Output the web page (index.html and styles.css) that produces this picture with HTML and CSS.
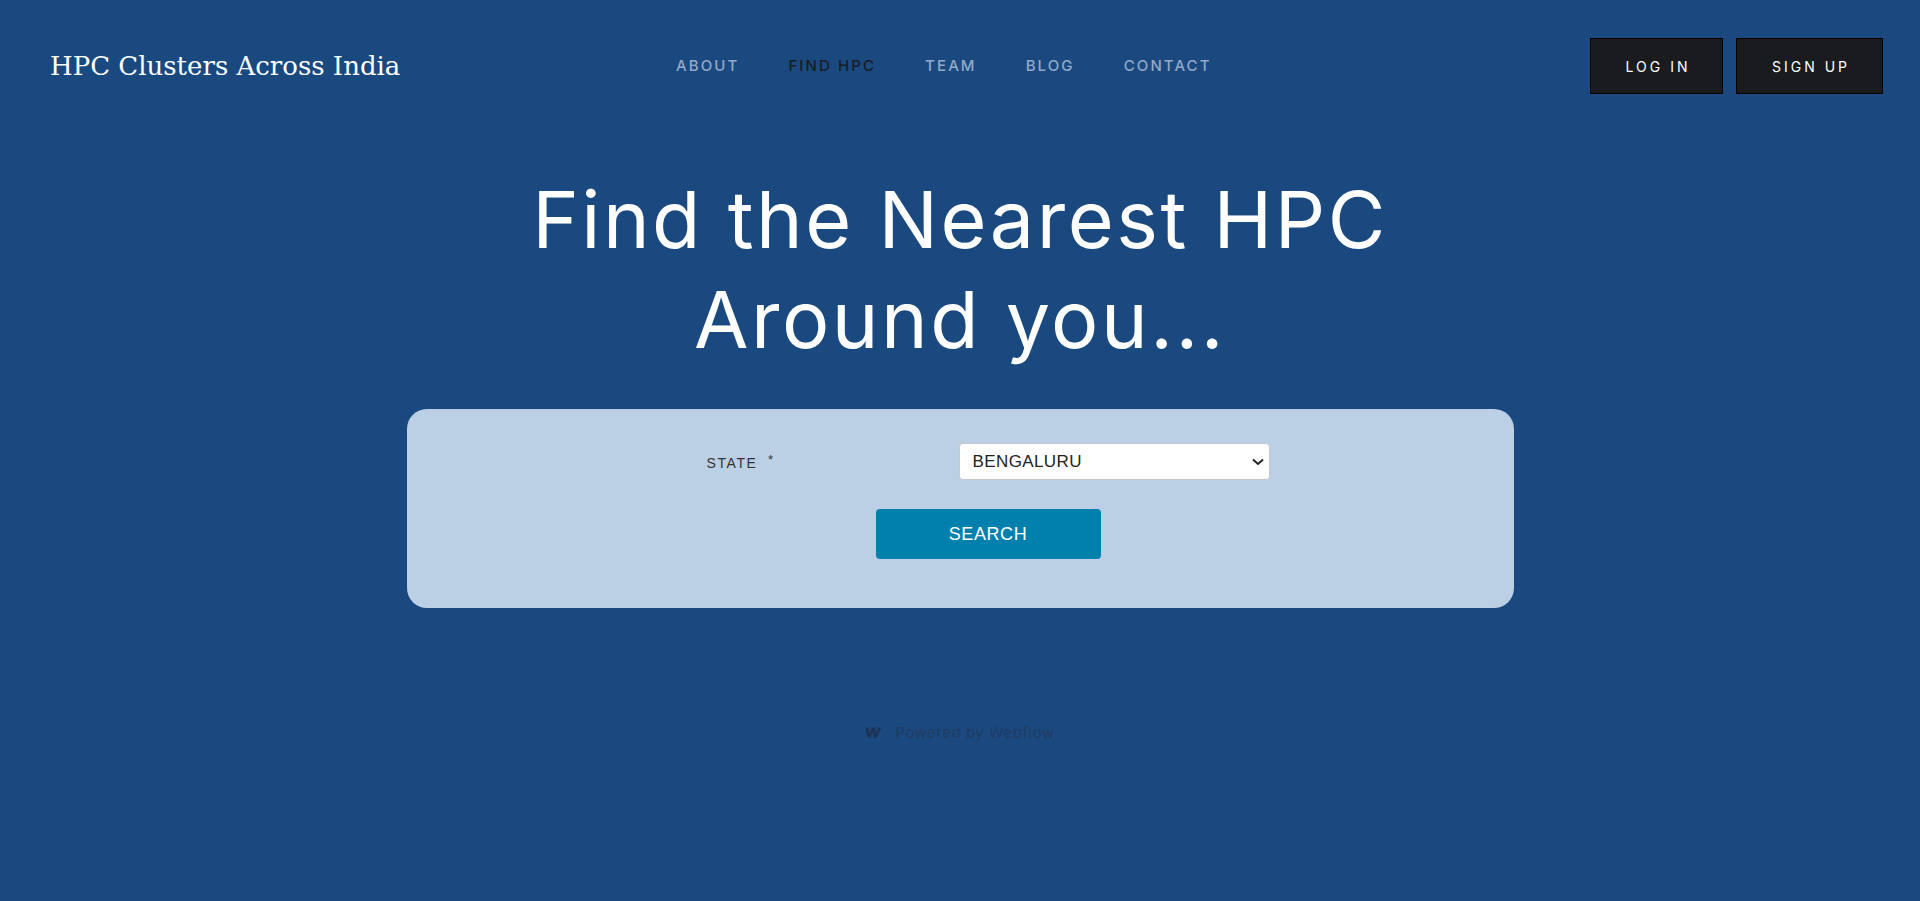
FILE: index.html
```html
<!DOCTYPE html>
<html lang="en">
<head>
<meta charset="utf-8">
<title>Find HPC</title>
<link rel="stylesheet" href="styles.css">
</head>
<body>
<header class="navbar">
  <a class="brand" href="#">HPC Clusters Across India</a>
  <nav class="nav-menu">
    <a class="nav-link" href="#">ABOUT</a>
    <a class="nav-link current" href="#">FIND HPC</a>
    <a class="nav-link" href="#">TEAM</a>
    <a class="nav-link" href="#">BLOG</a>
    <a class="nav-link" href="#">CONTACT</a>
  </nav>
  <div class="auth">
    <a class="btn btn-login" href="#">LOG IN</a>
    <a class="btn btn-signup" href="#">SIGN UP</a>
  </div>
</header>
<main class="hero">
  <h1 class="hero-title">Find the Nearest HPC<br>Around you...</h1>
  <form class="search-card">
    <div class="field-row">
      <label class="field-label" for="state">STATE <span class="req">*</span></label>
      <div class="select-wrap">
        <select id="state" class="select">
          <option>BENGALURU</option>
        </select>
        <svg class="chev" width="12" height="8" viewBox="0 0 12 8"><path d="M1 1.5 L6 6 L11 1.5" fill="none" stroke="#222" stroke-width="2"/></svg>
      </div>
    </div>
    <div class="btn-row">
      <button type="button" class="search-btn">SEARCH</button>
    </div>
  </form>
  <div class="powered">
    <svg class="wf" width="17" height="11" viewBox="0 0 17 11"><path d="M0.5 0.5 H3.6 L4.6 6.2 L7.4 0.5 H10.2 L10.9 6.2 L13.4 0.5 H16.5 L11.6 10.5 H8.7 L7.9 5 L5.2 10.5 H2.3 Z" fill="#1c3354"/></svg>
    <span class="powered-text">Powered by Webflow</span>
  </div>
</main>
</body>
</html>
```

FILE: styles.css
```css
* { box-sizing: border-box; }

html, body {
  margin: 0;
  padding: 0;
}

body {
  background: #1a4980;
  min-height: 100vh;
  font-family: Inter, "Open Sans", sans-serif;
}

a { text-decoration: none; }

.navbar {
  display: grid;
  grid-template-columns: 626px auto 1fr;
  align-items: center;
  padding: 38px 37px 0 50px;
  height: 94px;
}

.brand {
  font-family: "DejaVu Serif", "Liberation Serif", serif;
  font-size: 26px;
  color: #ffffff;
  white-space: nowrap;
  line-height: 56px;
}

.nav-menu {
  display: flex;
  align-items: center;
  gap: 49px;
}

.nav-link {
  font-family: Inter, sans-serif;
  font-size: 15px;
  font-weight: 500;
  letter-spacing: 2.1px;
  color: #93a9c6;
  line-height: 56px;
}

.nav-link.current {
  color: #1a1b1f;
}

.auth {
  justify-self: end;
  display: flex;
  gap: 13px;
}

.btn {
  display: flex;
  align-items: center;
  justify-content: center;
  height: 56px;
  background: #1a1b1f;
  border: 1px solid #000;
  color: #fff;
  font-family: Inter, sans-serif;
  font-size: 14px;
  letter-spacing: 3px;
  padding-left: 3px;
}

.btn-login { width: 133px; }
.btn-signup { width: 147px; }

.hero {
  display: flex;
  flex-direction: column;
  align-items: center;
}

.hero-title {
  margin: 75px 0 0;
  font-family: Inter, sans-serif;
  font-weight: 400;
  font-size: 79px;
  line-height: 100px;
  letter-spacing: 2.5px;
  color: #fff;
  text-align: center;
}

.search-card {
  margin-top: 40px;
  width: 1107px;
  background: #bbd0e5;
  border-radius: 20px;
  padding: 34px 0 49px;
}

.field-row {
  display: flex;
  align-items: center;
  padding-left: 300px;
  height: 37px;
}

.field-label {
  width: 252px;
  font-family: "Liberation Sans", Arial, sans-serif;
  font-size: 14px;
  letter-spacing: 1.6px;
  color: #333;
  padding-top: 3px;
}

.req {
  margin-left: 5px;
  font-size: 13px;
  position: relative;
  top: -4px;
}

.select-wrap {
  position: relative;
  width: 311px;
  height: 37px;
}

.select {
  width: 100%;
  height: 100%;
  -webkit-appearance: none;
  appearance: none;
  border: 1px solid #c5c9ce;
  border-radius: 4px;
  background: #fff;
  padding: 0 0 0 13px;
  font-family: "Liberation Sans", Arial, sans-serif;
  font-size: 17px;
  letter-spacing: 0.4px;
  color: #222;
}

.chev {
  position: absolute;
  right: 6px;
  top: 15px;
  pointer-events: none;
}

.btn-row {
  margin-top: 29px;
  padding-left: 469px;
}

.search-btn {
  width: 225px;
  height: 50px;
  background: #0080ad;
  color: #fff;
  border: none;
  border-radius: 4px;
  font-family: "Liberation Sans", Arial, sans-serif;
  font-size: 18px;
  letter-spacing: 0.6px;
}

.powered {
  margin-top: 115px;
  display: flex;
  align-items: center;
  gap: 13px;
}

.powered-text {
  font-family: Inter, sans-serif;
  font-size: 15px;
  letter-spacing: 0.5px;
  color: #203b60;
}
```
